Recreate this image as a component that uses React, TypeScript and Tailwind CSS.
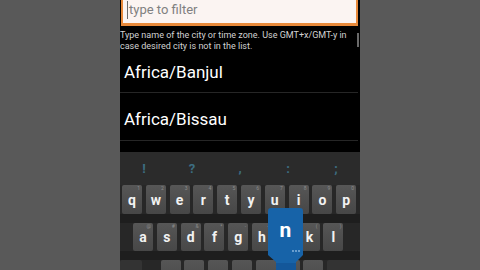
import React from "react";

const row1 = ["q", "w", "e", "r", "t", "y", "u", "i", "o", "p"];
const hint1 = ["1", "2", "3", "4", "5", "6", "7", "8", "9", "0"];
const row2 = ["a", "s", "d", "f", "g", "h", "", "k", "l"];
const hint2 = ["@", "#", "&", "*", "-", "+", "", "(", ")"];
const syms = ["!", "?", ",", ":", ";"];

function Key({ label, hint }: { label?: string; hint?: string }) {
  return (
    <div className="relative w-[20px] h-full rounded-[2px] bg-gradient-to-b from-[#565656] to-[#474747] flex items-center justify-center shrink-0">
      {label && <span className="text-[14px] font-bold text-[#f2f2f2] leading-none">{label}</span>}
      {hint && (
        <span className="absolute top-[1px] right-[2px] text-[5px] leading-none text-[#8c8c8c]">{hint}</span>
      )}
    </div>
  );
}

export default function App() {
  return (
    <div
      className="w-[480px] h-[270px] bg-[#595959] flex justify-center overflow-hidden"
      style={{ fontFamily: "Roboto, 'Noto Sans', 'Liberation Sans', sans-serif" }}
    >
      <div className="relative w-[240px] h-[270px] bg-black flex flex-col overflow-hidden">
        {/* filter input */}
        <div className="ml-[1px] w-[237px] h-[26px] shrink-0 bg-[#fbf4f2] border-x-2 border-b-[3px] border-[#e8893a] flex items-center pl-[4px]">
          <div className="w-px h-[18px] bg-[#6a6a6a] mr-[1px] -mt-[4px]" />
          <span className="text-[13px] text-[#808080] leading-none -mt-[4px]">type to filter</span>
        </div>
        <div className="h-px bg-[#3a2518] w-[238px]" />
        {/* help text */}
        <div className="relative mt-[4px] text-[9px] leading-[11px] text-[#d2d2d2] shrink-0 whitespace-nowrap">
          <div>Type name of the city or time zone. Use GMT+x/GMT-y in</div>
          <div>case desired city is not in the list.</div>
          <div className="absolute right-[1px] top-[3px] w-[2px] h-[14px] bg-[#6a6a6a]" />
        </div>
        {/* list */}
        <div className="h-[41px] shrink-0 flex items-center pl-[4px] pt-[1px] border-b border-[#262626] w-[238px]">
          <span className="text-[17px] text-white">Africa/Banjul</span>
        </div>
        <div className="h-[48px] shrink-0 flex items-center pl-[4px] pt-[6px] border-b border-[#262626] w-[238px]">
          <span className="text-[17px] text-white">Africa/Bissau</span>
        </div>
        <div className="h-[11px] shrink-0" />
        {/* keyboard */}
        <div className="flex-1 bg-[#272727] flex flex-col">
          <div className="h-[33px] grid grid-cols-5 items-center shrink-0 bg-[#2b2b2b]">
            {syms.map((s) => (
              <div key={s} className="flex justify-center text-[13px] font-bold text-[#3d6e82] leading-none">
                {s}
              </div>
            ))}
          </div>
          <div className="h-[29px] flex gap-[3.8px] pl-[2px] shrink-0">
            {row1.map((k, i) => (
              <Key key={k} label={k} hint={hint1[i]} />
            ))}
          </div>
          <div className="h-[9px] shrink-0 bg-[#1e1e1e]" />
          <div className="h-[28px] flex gap-[3.8px] pl-[13px] shrink-0">
            {row2.map((k, i) => (
              <Key key={i} label={k} hint={hint2[i]} />
            ))}
          </div>
          <div className="h-[9px] shrink-0 bg-[#1e1e1e]" />
          <div className="h-[29px] flex gap-[3.8px] shrink-0">
            <div className="w-[22px] h-full rounded-[2px] bg-[#333333] shrink-0" />
            <div className="w-[11px] shrink-0" />
            {[0, 1, 2, 3, 4, 5, 6].map((k) => (
              <Key key={k} />
            ))}
            <div className="w-[34px] h-full rounded-[2px] bg-[#333333] shrink-0" />
          </div>
        </div>
        {/* key preview popup */}
        <div className="absolute left-[148px] top-[208px] w-[35px] h-[62px]">
          <svg width="35" height="62" viewBox="0 0 35 62" className="absolute inset-0">
            <path d="M3 0 H32 Q35 0 35 3 V47 L28 54 V62 H8 V54 L0 47 V3 Q0 0 3 0 Z" fill="#1763a8" />
            <rect x="8" y="55" width="20" height="7" fill="#13579a" />
            <circle cx="25" cy="43" r="0.9" fill="#8fbbe2" />
            <circle cx="28" cy="43" r="0.9" fill="#8fbbe2" />
            <circle cx="31" cy="43" r="0.9" fill="#8fbbe2" />
          </svg>
          <div className="absolute left-0 top-[12px] w-[35px] flex justify-center">
            <span className="text-[21px] font-bold text-white leading-none">n</span>
          </div>
        </div>
      </div>
    </div>
  );
}
